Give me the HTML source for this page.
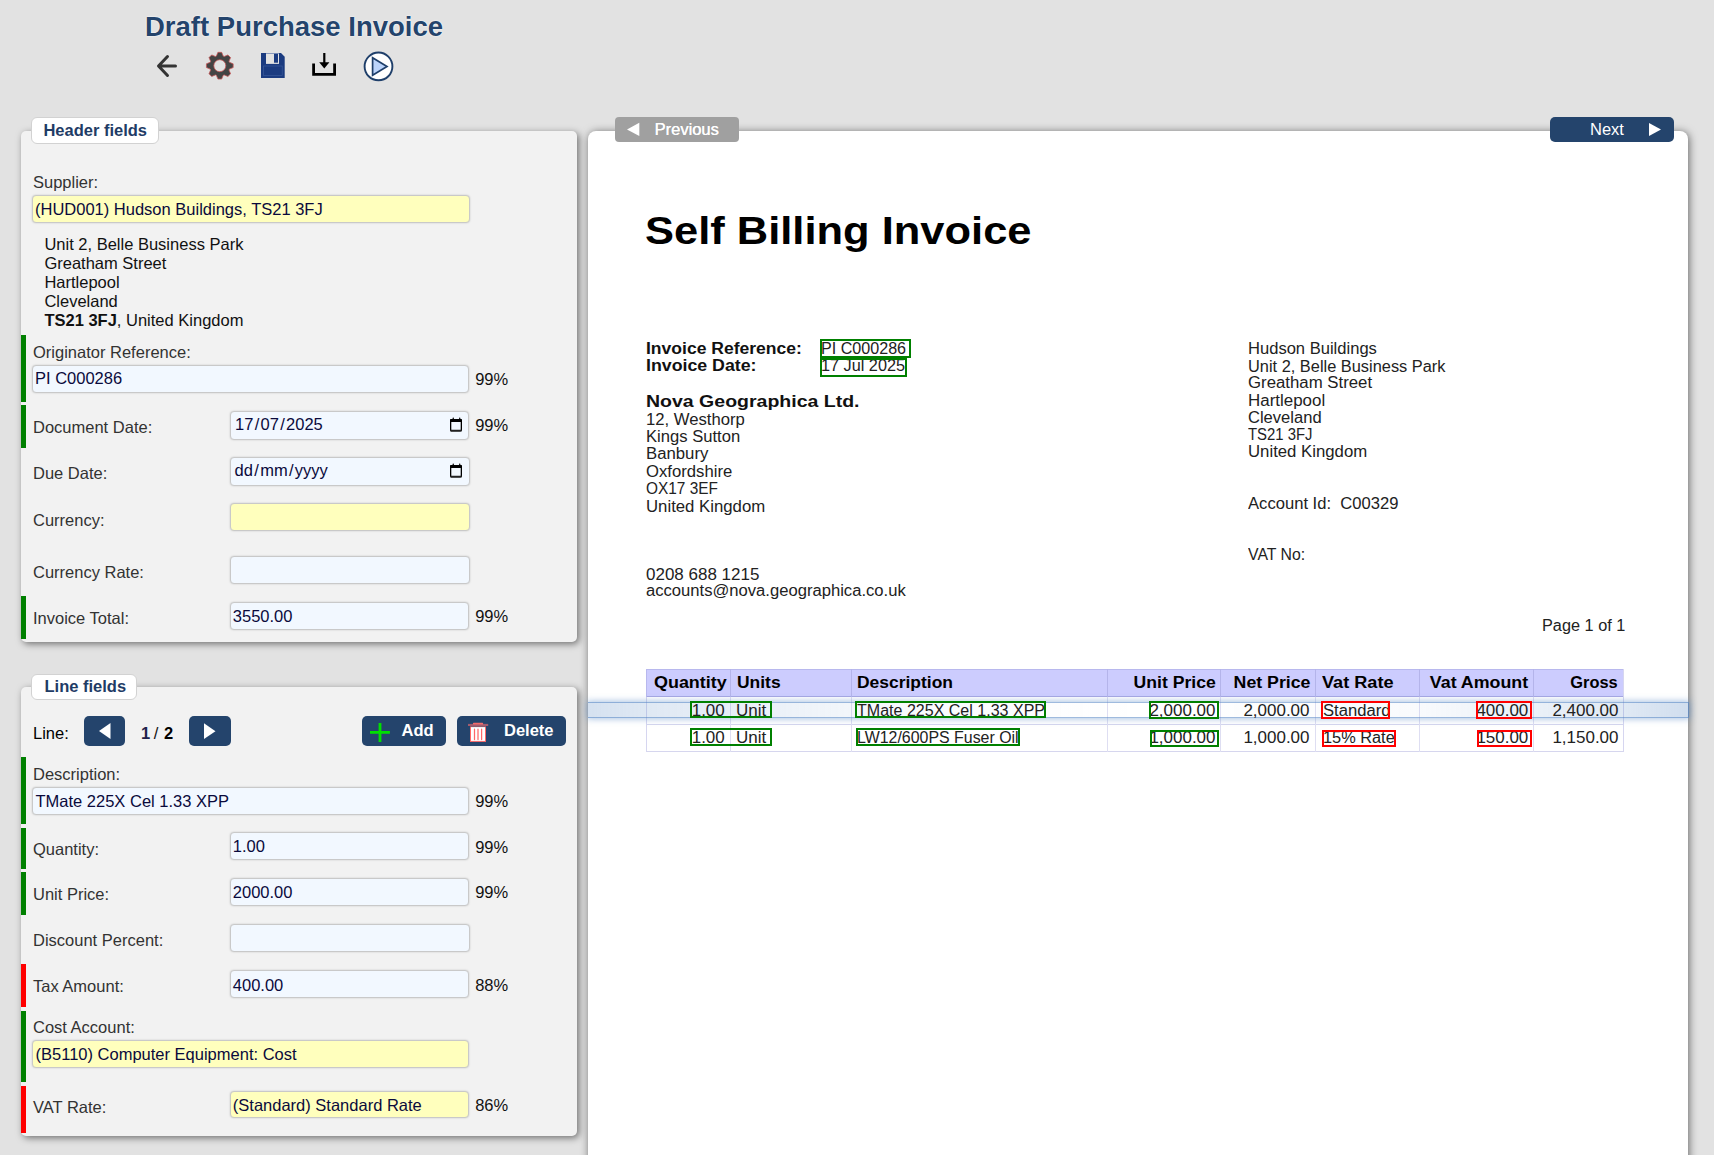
<!DOCTYPE html>
<html><head><meta charset="utf-8"><title>Draft Purchase Invoice</title>
<style>
html,body{margin:0;padding:0;}
body{width:1714px;height:1155px;overflow:hidden;position:relative;background:#e2e2e2;font-family:'Liberation Sans', sans-serif;}
</style></head><body>
<div style="position:absolute;left:145.00px;top:13.00px;font-size:27.5px;font-weight:700;line-height:27.5px;color:#24446c;white-space:nowrap;text-shadow:0 0 2px #fff,0 0 1px #fff;">Draft Purchase Invoice</div>
<svg style="position:absolute;left:0;top:0" width="420" height="100" viewBox="0 0 420 100">
<g fill="none" stroke="#333" stroke-width="3" stroke-linecap="round" stroke-linejoin="round">
<path d="M175.5 66 H159.5 M167.5 56.5 L158.5 66 L167.5 75.5"/></g>
<g transform="translate(219.8 65.7)">
<path fill="#444" stroke="#c55" stroke-width="0.75" stroke-linejoin="round" fill-rule="evenodd" d="M-3.90 -9.42 L-3.40 -9.62 L-1.88 -13.37 L1.88 -13.37 L3.40 -9.62 L3.90 -9.42 L4.39 -9.20 L8.12 -10.78 L10.78 -8.12 L9.20 -4.39 L9.42 -3.90 L9.62 -3.40 L13.37 -1.88 L13.37 1.88 L9.62 3.40 L9.42 3.90 L9.20 4.39 L10.78 8.12 L8.12 10.78 L4.39 9.20 L3.90 9.42 L3.40 9.62 L1.88 13.37 L-1.88 13.37 L-3.40 9.62 L-3.90 9.42 L-4.39 9.20 L-8.12 10.78 L-10.78 8.12 L-9.20 4.39 L-9.42 3.90 L-9.62 3.40 L-13.37 1.88 L-13.37 -1.88 L-9.62 -3.40 L-9.42 -3.90 L-9.20 -4.39 L-10.78 -8.12 L-8.12 -10.78 L-4.39 -9.20 Z M6.0 0 A6.0 6.0 0 1 0 -6.0 0 A6.0 6.0 0 1 0 6.0 0 Z"/>
</g>
<path fill="#1b3b80" d="M261 53 H281 L284.7 56.7 V78 H261 Z"/>
<rect x="266" y="53.6" width="13" height="10.3" fill="#e2e2e2"/>
<rect x="266" y="53" width="13" height="0.9" fill="#8c9cc0"/>
<rect x="274" y="53.8" width="4" height="8.9" fill="#1b3b80"/>
<rect x="263.5" y="66" width="18.7" height="9.5" fill="none" stroke="#3a5a9a" stroke-width="0.7"/>
<g fill="none" stroke="#000" stroke-width="2.8" stroke-linecap="butt" stroke-linejoin="miter">
<path d="M313.6 63.5 V74.3 H334.6 V63.5"/></g>
<path d="M324.3 53 V64" stroke="#000" stroke-width="2.2"/>
<path d="M319.2 62.2 H329.4 L324.3 68.6 Z" fill="#000"/>
<circle cx="378.5" cy="66.4" r="13.9" fill="#fff" stroke="#1f3f6a" stroke-width="1.9"/>
<path d="M372.6 57.7 L387 66.4 L372.6 75.3 Z" fill="#bcd4fb" stroke="#1f3f6a" stroke-width="1.7" stroke-linejoin="miter"/>
</svg>
<div style="position:absolute;left:21px;top:131px;width:556px;height:511px;background:#f2f2f2;border-radius:5px;box-shadow:2px 2px 7px rgba(0,0,0,0.5);"></div>
<div style="position:absolute;left:31px;top:117px;width:127.5px;height:26.5px;background:#fff;border-radius:6px;border:1px solid #d2d2d2;box-sizing:border-box;"></div>
<div style="position:absolute;left:43.40px;top:122.00px;font-size:16.5px;font-weight:700;line-height:16.5px;color:#1f3c66;white-space:nowrap;">Header fields</div>
<div style="position:absolute;left:21px;top:687px;width:556px;height:449px;background:#f2f2f2;border-radius:5px;box-shadow:2px 2px 7px rgba(0,0,0,0.5);"></div>
<div style="position:absolute;left:31px;top:674px;width:105.5px;height:26px;background:#fff;border-radius:6px;border:1px solid #d2d2d2;box-sizing:border-box;"></div>
<div style="position:absolute;left:44.50px;top:678.00px;font-size:16.5px;font-weight:700;line-height:16.5px;color:#1f3c66;white-space:nowrap;">Line fields</div>
<div style="position:absolute;left:33.00px;top:174.00px;font-size:16.5px;font-weight:400;line-height:16.5px;color:#333;white-space:nowrap;">Supplier:</div>
<div style="position:absolute;left:32px;top:195px;width:438px;height:28px;background:#ffffbd;border:1px solid #c9c9c9;border-radius:4px;box-sizing:border-box;box-shadow:0 0 2px rgba(0,0,0,0.18);"></div>
<div style="position:absolute;left:35.00px;top:201.00px;font-size:16.5px;font-weight:400;line-height:16.5px;color:#0a0a3c;white-space:nowrap;">(HUD001) Hudson Buildings, TS21 3FJ</div>
<div style="position:absolute;left:44.40px;top:236.00px;font-size:16.5px;font-weight:400;line-height:16.5px;color:#111;white-space:nowrap;">Unit 2, Belle Business Park</div>
<div style="position:absolute;left:44.40px;top:255.00px;font-size:16.5px;font-weight:400;line-height:16.5px;color:#111;white-space:nowrap;">Greatham Street</div>
<div style="position:absolute;left:44.40px;top:274.00px;font-size:16.5px;font-weight:400;line-height:16.5px;color:#111;white-space:nowrap;">Hartlepool</div>
<div style="position:absolute;left:44.40px;top:293.00px;font-size:16.5px;font-weight:400;line-height:16.5px;color:#111;white-space:nowrap;">Cleveland</div>
<div style="position:absolute;left:44.4px;top:312px;font-size:16.5px;line-height:16.5px;color:#111;white-space:nowrap"><b>TS21 3FJ</b>, United Kingdom</div>
<div style="position:absolute;left:21px;top:335px;width:5px;height:67px;background:#008000;"></div>
<div style="position:absolute;left:33.00px;top:344.00px;font-size:16.5px;font-weight:400;line-height:16.5px;color:#333;white-space:nowrap;">Originator Reference:</div>
<div style="position:absolute;left:32px;top:365px;width:437px;height:28px;background:#f2f8ff;border:1px solid #c9c9c9;border-radius:4px;box-sizing:border-box;box-shadow:0 0 2px rgba(0,0,0,0.18);"></div>
<div style="position:absolute;left:35.00px;top:370.00px;font-size:16.5px;font-weight:400;line-height:16.5px;color:#0a0a3c;white-space:nowrap;">PI C000286</div>
<div style="position:absolute;left:475.20px;top:371.00px;font-size:16.5px;font-weight:400;line-height:16.5px;color:#111;white-space:nowrap;">99%</div>
<div style="position:absolute;left:21px;top:405px;width:5px;height:43px;background:#008000;"></div>
<div style="position:absolute;left:33.00px;top:418.50px;font-size:16.5px;font-weight:400;line-height:16.5px;color:#333;white-space:nowrap;">Document Date:</div>
<div style="position:absolute;left:230px;top:411px;width:238.5px;height:28.5px;background:#f2f8ff;border:1px solid #c9c9c9;border-radius:4px;box-sizing:border-box;box-shadow:0 0 2px rgba(0,0,0,0.18);"></div>
<div style="position:absolute;left:235.00px;top:416.00px;font-size:16.5px;font-weight:400;line-height:16.5px;color:#0a0a3c;white-space:nowrap;">17<span style="margin:0 1.3px">/</span>07<span style="margin:0 1.3px">/</span>2025</div>
<div style="position:absolute;left:475.20px;top:417.20px;font-size:16.5px;font-weight:400;line-height:16.5px;color:#111;white-space:nowrap;">99%</div>
<div style="position:absolute;left:33.00px;top:465.00px;font-size:16.5px;font-weight:400;line-height:16.5px;color:#333;white-space:nowrap;">Due Date:</div>
<div style="position:absolute;left:230px;top:457px;width:239.5px;height:28.5px;background:#f2f8ff;border:1px solid #c9c9c9;border-radius:4px;box-sizing:border-box;box-shadow:0 0 2px rgba(0,0,0,0.18);"></div>
<div style="position:absolute;left:234.60px;top:462.00px;font-size:16.5px;font-weight:400;line-height:16.5px;color:#0a0a3c;white-space:nowrap;">dd<span style="margin:0 1.3px">/</span>mm<span style="margin:0 1.3px">/</span>yyyy</div>
<div style="position:absolute;left:33.00px;top:512.00px;font-size:16.5px;font-weight:400;line-height:16.5px;color:#333;white-space:nowrap;">Currency:</div>
<div style="position:absolute;left:230px;top:503px;width:239.5px;height:28px;background:#ffffbd;border:1px solid #c9c9c9;border-radius:4px;box-sizing:border-box;box-shadow:0 0 2px rgba(0,0,0,0.18);"></div>
<div style="position:absolute;left:33.00px;top:564.00px;font-size:16.5px;font-weight:400;line-height:16.5px;color:#333;white-space:nowrap;">Currency Rate:</div>
<div style="position:absolute;left:230px;top:556px;width:239.5px;height:28px;background:#f2f8ff;border:1px solid #c9c9c9;border-radius:4px;box-sizing:border-box;box-shadow:0 0 2px rgba(0,0,0,0.18);"></div>
<div style="position:absolute;left:21px;top:596px;width:5px;height:43px;background:#008000;"></div>
<div style="position:absolute;left:33.00px;top:610.00px;font-size:16.5px;font-weight:400;line-height:16.5px;color:#333;white-space:nowrap;">Invoice Total:</div>
<div style="position:absolute;left:230px;top:602px;width:238.5px;height:28px;background:#f2f8ff;border:1px solid #c9c9c9;border-radius:4px;box-sizing:border-box;box-shadow:0 0 2px rgba(0,0,0,0.18);"></div>
<div style="position:absolute;left:232.80px;top:608.00px;font-size:16.5px;font-weight:400;line-height:16.5px;color:#0a0a3c;white-space:nowrap;">3550.00</div>
<div style="position:absolute;left:475.20px;top:608.00px;font-size:16.5px;font-weight:400;line-height:16.5px;color:#111;white-space:nowrap;">99%</div>
<svg style="position:absolute;left:449px;top:417px" width="14" height="16" viewBox="0 0 14 16"><rect x="1.65" y="3.5" width="10.7" height="10.3" rx="1.2" fill="none" stroke="#000" stroke-width="1.3"/><rect x="1" y="2" width="12" height="3" rx="0.6" fill="#000"/><path d="M3.3 2.6 L3.9 0.6 H4.6 L5.1 2.6 Z M9.9 2.6 L10.4 0.6 H11.1 L11.6 2.6 Z" fill="#000"/><rect x="1" y="12.8" width="12" height="1.8" rx="0.8" fill="#222"/></svg>
<svg style="position:absolute;left:449px;top:463px" width="14" height="16" viewBox="0 0 14 16"><rect x="1.65" y="3.5" width="10.7" height="10.3" rx="1.2" fill="none" stroke="#000" stroke-width="1.3"/><rect x="1" y="2" width="12" height="3" rx="0.6" fill="#000"/><path d="M3.3 2.6 L3.9 0.6 H4.6 L5.1 2.6 Z M9.9 2.6 L10.4 0.6 H11.1 L11.6 2.6 Z" fill="#000"/><rect x="1" y="12.8" width="12" height="1.8" rx="0.8" fill="#222"/></svg>
<div style="position:absolute;left:33.00px;top:725.00px;font-size:16.5px;font-weight:400;line-height:16.5px;color:#000;white-space:nowrap;">Line:</div>
<div style="position:absolute;left:84px;top:716px;width:41px;height:30px;background:#24446c;border-radius:5px;"></div>
<div style="position:absolute;left:141.00px;top:725.00px;font-size:16.5px;font-weight:700;line-height:16.5px;color:#22224a;white-space:nowrap;">1</div>
<div style="position:absolute;left:153.80px;top:725.00px;font-size:16.5px;font-weight:400;line-height:16.5px;color:#111;white-space:nowrap;">/</div>
<div style="position:absolute;left:164.00px;top:725.00px;font-size:16.5px;font-weight:700;line-height:16.5px;color:#000;white-space:nowrap;">2</div>
<div style="position:absolute;left:189px;top:716px;width:42px;height:30px;background:#24446c;border-radius:5px;"></div>
<svg style="position:absolute;left:0;top:700px" width="240" height="50"><path d="M99 31 L110.5 23 V39 Z" fill="#fff"/><path d="M204 23.3 L215.5 31.2 L204 39 Z" fill="#fff"/></svg>
<div style="position:absolute;left:362px;top:716px;width:84px;height:30px;background:#24446c;border-radius:5px;"></div>
<div style="position:absolute;left:401.50px;top:722.00px;font-size:16.5px;font-weight:700;line-height:16.5px;color:#fff;white-space:nowrap;">Add</div>
<div style="position:absolute;left:457px;top:716px;width:109px;height:30px;background:#24446c;border-radius:5px;"></div>
<div style="position:absolute;left:504.00px;top:722.00px;font-size:16.5px;font-weight:700;line-height:16.5px;color:#fff;white-space:nowrap;">Delete</div>
<svg style="position:absolute;left:360px;top:710px" width="220" height="40"><path d="M20 13 V32 M10 22.4 H29.9" stroke="#00e000" stroke-width="2.8"/></svg>
<svg style="position:absolute;left:462px;top:718px" width="32" height="28"><rect x="6" y="5.9" width="20.2" height="2.1" fill="#a35c6e"/><rect x="11" y="4.7" width="10.1" height="1.9" rx="0.6" fill="#f26b6b"/><rect x="8.5" y="8.5" width="15" height="14.9" fill="#fff" stroke="#ff6868" stroke-width="1"/><rect x="8" y="8" width="16" height="1.1" fill="#8d5a6c"/><path d="M12.5 11.2 V21.5 M16 11.2 V21.5 M19.6 11.2 V21.5" stroke="#ff6868" stroke-width="1.25" stroke-linecap="round"/></svg>
<div style="position:absolute;left:21px;top:757px;width:5px;height:66.5px;background:#008000;"></div>
<div style="position:absolute;left:33.00px;top:766.30px;font-size:16.5px;font-weight:400;line-height:16.5px;color:#333;white-space:nowrap;">Description:</div>
<div style="position:absolute;left:32px;top:787px;width:437px;height:28px;background:#f2f8ff;border:1px solid #c9c9c9;border-radius:4px;box-sizing:border-box;box-shadow:0 0 2px rgba(0,0,0,0.18);"></div>
<div style="position:absolute;left:35.50px;top:792.70px;font-size:16.5px;font-weight:400;line-height:16.5px;color:#0a0a3c;white-space:nowrap;">TMate 225X Cel 1.33 XPP</div>
<div style="position:absolute;left:475.20px;top:793.40px;font-size:16.5px;font-weight:400;line-height:16.5px;color:#111;white-space:nowrap;">99%</div>
<div style="position:absolute;left:21px;top:827.5px;width:5px;height:41.0px;background:#008000;"></div>
<div style="position:absolute;left:33.00px;top:841.20px;font-size:16.5px;font-weight:400;line-height:16.5px;color:#333;white-space:nowrap;">Quantity:</div>
<div style="position:absolute;left:230px;top:832px;width:238.5px;height:28px;background:#f2f8ff;border:1px solid #c9c9c9;border-radius:4px;box-sizing:border-box;box-shadow:0 0 2px rgba(0,0,0,0.18);"></div>
<div style="position:absolute;left:232.80px;top:838.20px;font-size:16.5px;font-weight:400;line-height:16.5px;color:#0a0a3c;white-space:nowrap;">1.00</div>
<div style="position:absolute;left:475.20px;top:838.50px;font-size:16.5px;font-weight:400;line-height:16.5px;color:#111;white-space:nowrap;">99%</div>
<div style="position:absolute;left:21px;top:872px;width:5px;height:43px;background:#008000;"></div>
<div style="position:absolute;left:33.00px;top:885.70px;font-size:16.5px;font-weight:400;line-height:16.5px;color:#333;white-space:nowrap;">Unit Price:</div>
<div style="position:absolute;left:230px;top:878px;width:238.5px;height:28px;background:#f2f8ff;border:1px solid #c9c9c9;border-radius:4px;box-sizing:border-box;box-shadow:0 0 2px rgba(0,0,0,0.18);"></div>
<div style="position:absolute;left:232.80px;top:884.00px;font-size:16.5px;font-weight:400;line-height:16.5px;color:#0a0a3c;white-space:nowrap;">2000.00</div>
<div style="position:absolute;left:475.20px;top:884.00px;font-size:16.5px;font-weight:400;line-height:16.5px;color:#111;white-space:nowrap;">99%</div>
<div style="position:absolute;left:33.00px;top:932.00px;font-size:16.5px;font-weight:400;line-height:16.5px;color:#333;white-space:nowrap;">Discount Percent:</div>
<div style="position:absolute;left:230px;top:924px;width:239.5px;height:28px;background:#f2f8ff;border:1px solid #c9c9c9;border-radius:4px;box-sizing:border-box;box-shadow:0 0 2px rgba(0,0,0,0.18);"></div>
<div style="position:absolute;left:21px;top:964px;width:5px;height:43px;background:#ff0000;"></div>
<div style="position:absolute;left:33.00px;top:978.20px;font-size:16.5px;font-weight:400;line-height:16.5px;color:#333;white-space:nowrap;">Tax Amount:</div>
<div style="position:absolute;left:230px;top:970px;width:238.5px;height:28px;background:#f2f8ff;border:1px solid #c9c9c9;border-radius:4px;box-sizing:border-box;box-shadow:0 0 2px rgba(0,0,0,0.18);"></div>
<div style="position:absolute;left:232.80px;top:976.50px;font-size:16.5px;font-weight:400;line-height:16.5px;color:#0a0a3c;white-space:nowrap;">400.00</div>
<div style="position:absolute;left:475.20px;top:976.50px;font-size:16.5px;font-weight:400;line-height:16.5px;color:#111;white-space:nowrap;">88%</div>
<div style="position:absolute;left:21px;top:1010.5px;width:5px;height:71.5px;background:#008000;"></div>
<div style="position:absolute;left:33.00px;top:1018.80px;font-size:16.5px;font-weight:400;line-height:16.5px;color:#333;white-space:nowrap;">Cost Account:</div>
<div style="position:absolute;left:32px;top:1040px;width:437px;height:28px;background:#ffffbd;border:1px solid #c9c9c9;border-radius:4px;box-sizing:border-box;box-shadow:0 0 2px rgba(0,0,0,0.18);"></div>
<div style="position:absolute;left:35.50px;top:1046.00px;font-size:16.5px;font-weight:400;line-height:16.5px;color:#0a0a3c;white-space:nowrap;">(B5110) Computer Equipment: Cost</div>
<div style="position:absolute;left:21px;top:1085.5px;width:5px;height:47.5px;background:#ff0000;"></div>
<div style="position:absolute;left:33.00px;top:1099.30px;font-size:16.5px;font-weight:400;line-height:16.5px;color:#333;white-space:nowrap;">VAT Rate:</div>
<div style="position:absolute;left:230px;top:1091px;width:238.5px;height:27px;background:#ffffbd;border:1px solid #c9c9c9;border-radius:4px;box-sizing:border-box;box-shadow:0 0 2px rgba(0,0,0,0.18);"></div>
<div style="position:absolute;left:232.80px;top:1096.50px;font-size:16.5px;font-weight:400;line-height:16.5px;color:#0a0a3c;white-space:nowrap;">(Standard) Standard Rate</div>
<div style="position:absolute;left:475.20px;top:1096.50px;font-size:16.5px;font-weight:400;line-height:16.5px;color:#111;white-space:nowrap;">86%</div>
<div style="position:absolute;left:588px;top:131px;width:1100px;height:1200px;background:#fff;border-radius:8px;box-shadow:1px 1px 9px rgba(0,0,0,0.55);"></div>
<div style="position:absolute;left:615px;top:117px;width:124px;height:25px;background:#a0a0a0;border-radius:4px;"></div>
<div style="position:absolute;left:1550px;top:117px;width:124px;height:25px;background:#24446c;border-radius:5px;"></div>
<svg style="position:absolute;left:600px;top:110px" width="1100" height="40"><path d="M27 19.4 L39.3 12.7 V26 Z" fill="#fff"/><path d="M1049 13 L1061 19.5 L1049 26 Z" fill="#fff"/></svg>
<div style="position:absolute;left:654.50px;top:121.30px;font-size:16.5px;font-weight:400;line-height:16.5px;color:#fff;white-space:nowrap;text-shadow:0.3px 0 0 #fff;">Previous</div>
<div style="position:absolute;left:1590.00px;top:121.00px;font-size:16.5px;font-weight:400;line-height:16.5px;color:#fff;white-space:nowrap;">Next</div>
<div style="position:absolute;left:644.60px;top:211.30px;font-size:39px;font-weight:700;line-height:39px;color:#000;white-space:nowrap;transform:scaleX(1.1147);transform-origin:left 0;">Self Billing Invoice</div>
<div style="position:absolute;left:646.00px;top:340.80px;font-size:15.8px;font-weight:700;line-height:15.8px;color:#111;white-space:nowrap;transform:scaleX(1.1096);transform-origin:left 0;">Invoice Reference:</div>
<div style="position:absolute;left:646.00px;top:358.40px;font-size:15.8px;font-weight:700;line-height:15.8px;color:#111;white-space:nowrap;transform:scaleX(1.1241);transform-origin:left 0;">Invoice Date:</div>
<div style="position:absolute;left:820.60px;top:340.80px;font-size:15.8px;font-weight:400;line-height:15.8px;color:#222;white-space:nowrap;transform:scaleX(1.0197);transform-origin:left 0;">PI C000286</div>
<div style="position:absolute;left:820.60px;top:358.40px;font-size:15.8px;font-weight:400;line-height:15.8px;color:#222;white-space:nowrap;transform:scaleX(1.0285);transform-origin:left 0;">17 Jul 2025</div>
<div style="position:absolute;left:820px;top:339px;width:91px;height:18.5px;border:2px solid #008000;box-sizing:border-box;"></div>
<div style="position:absolute;left:820px;top:357.5px;width:86.5px;height:19.0px;border:2px solid #008000;box-sizing:border-box;"></div>
<div style="position:absolute;left:646.00px;top:392.50px;font-size:17.4px;font-weight:700;line-height:17.4px;color:#111;white-space:nowrap;transform:scaleX(1.1215);transform-origin:left 0;">Nova Geographica Ltd.</div>
<div style="position:absolute;left:646.00px;top:411.70px;font-size:15.8px;font-weight:400;line-height:15.8px;color:#222;white-space:nowrap;transform:scaleX(1.0552);transform-origin:left 0;">12, Westhorp</div>
<div style="position:absolute;left:646.00px;top:429.10px;font-size:15.8px;font-weight:400;line-height:15.8px;color:#222;white-space:nowrap;transform:scaleX(1.0506);transform-origin:left 0;">Kings Sutton</div>
<div style="position:absolute;left:646.00px;top:446.00px;font-size:15.8px;font-weight:400;line-height:15.8px;color:#222;white-space:nowrap;transform:scaleX(1.0605);transform-origin:left 0;">Banbury</div>
<div style="position:absolute;left:646.00px;top:463.70px;font-size:15.8px;font-weight:400;line-height:15.8px;color:#222;white-space:nowrap;transform:scaleX(1.0559);transform-origin:left 0;">Oxfordshire</div>
<div style="position:absolute;left:646.00px;top:480.50px;font-size:15.8px;font-weight:400;line-height:15.8px;color:#222;white-space:nowrap;transform:scaleX(0.9744);transform-origin:left 0;">OX17 3EF</div>
<div style="position:absolute;left:646.00px;top:498.50px;font-size:15.8px;font-weight:400;line-height:15.8px;color:#222;white-space:nowrap;transform:scaleX(1.0601);transform-origin:left 0;">United Kingdom</div>
<div style="position:absolute;left:646.00px;top:566.80px;font-size:15.8px;font-weight:400;line-height:15.8px;color:#222;white-space:nowrap;transform:scaleX(1.0750);transform-origin:left 0;">0208 688 1215</div>
<div style="position:absolute;left:646.00px;top:582.90px;font-size:15.8px;font-weight:400;line-height:15.8px;color:#222;white-space:nowrap;transform:scaleX(1.0514);transform-origin:left 0;">accounts@nova.geographica.co.uk</div>
<div style="position:absolute;left:1248.00px;top:340.90px;font-size:15.8px;font-weight:400;line-height:15.8px;color:#222;white-space:nowrap;transform:scaleX(1.0483);transform-origin:left 0;">Hudson Buildings</div>
<div style="position:absolute;left:1248.00px;top:358.60px;font-size:15.8px;font-weight:400;line-height:15.8px;color:#222;white-space:nowrap;transform:scaleX(1.0365);transform-origin:left 0;">Unit 2, Belle Business Park</div>
<div style="position:absolute;left:1248.00px;top:375.40px;font-size:15.8px;font-weight:400;line-height:15.8px;color:#222;white-space:nowrap;transform:scaleX(1.0629);transform-origin:left 0;">Greatham Street</div>
<div style="position:absolute;left:1248.00px;top:393.00px;font-size:15.8px;font-weight:400;line-height:15.8px;color:#222;white-space:nowrap;transform:scaleX(1.0714);transform-origin:left 0;">Hartlepool</div>
<div style="position:absolute;left:1248.00px;top:409.50px;font-size:15.8px;font-weight:400;line-height:15.8px;color:#222;white-space:nowrap;transform:scaleX(1.0474);transform-origin:left 0;">Cleveland</div>
<div style="position:absolute;left:1248.00px;top:427.00px;font-size:15.8px;font-weight:400;line-height:15.8px;color:#222;white-space:nowrap;transform:scaleX(0.9414);transform-origin:left 0;">TS21 3FJ</div>
<div style="position:absolute;left:1248.00px;top:444.00px;font-size:15.8px;font-weight:400;line-height:15.8px;color:#222;white-space:nowrap;transform:scaleX(1.0601);transform-origin:left 0;">United Kingdom</div>
<div style="position:absolute;left:1248.00px;top:495.90px;font-size:15.8px;font-weight:400;line-height:15.8px;color:#222;white-space:nowrap;transform:scaleX(1.0512);transform-origin:left 0;">Account Id:&nbsp; C00329</div>
<div style="position:absolute;left:1248.00px;top:546.90px;font-size:15.8px;font-weight:400;line-height:15.8px;color:#222;white-space:nowrap;transform:scaleX(1.0019);transform-origin:left 0;">VAT No:</div>
<div style="position:absolute;left:1542.00px;top:618.00px;font-size:15.8px;font-weight:400;line-height:15.8px;color:#222;white-space:nowrap;transform:scaleX(1.0307);transform-origin:left 0;">Page 1 of 1</div>
<div style="position:absolute;left:646px;top:669px;width:978px;height:28px;background:#ccccfe;"></div>
<div style="position:absolute;left:646px;top:696px;width:978px;height:1px;background:#a8a8e2;"></div>
<div style="position:absolute;left:646px;top:669px;width:978px;height:1px;background:#b8b8ee;"></div>
<div style="position:absolute;left:646px;top:697px;width:1px;height:55px;background:#d6d6f0;"></div>
<div style="position:absolute;left:1623px;top:669px;width:1px;height:83px;background:#d6d6f0;"></div>
<div style="position:absolute;left:646px;top:669px;width:1px;height:28px;background:#b8b8ee;"></div>
<div style="position:absolute;left:646px;top:723.5px;width:978px;height:1.2px;background:#d6d6ee;"></div>
<div style="position:absolute;left:646px;top:751px;width:978px;height:1.2px;background:#d6d6ee;"></div>
<div style="position:absolute;left:730.4px;top:669px;width:1px;height:28px;background:#b4b4ea;"></div>
<div style="position:absolute;left:730.4px;top:697px;width:1px;height:55px;background:#dedef2;"></div>
<div style="position:absolute;left:851.2px;top:669px;width:1px;height:28px;background:#b4b4ea;"></div>
<div style="position:absolute;left:851.2px;top:697px;width:1px;height:55px;background:#dedef2;"></div>
<div style="position:absolute;left:1107.2px;top:669px;width:1px;height:28px;background:#b4b4ea;"></div>
<div style="position:absolute;left:1107.2px;top:697px;width:1px;height:55px;background:#dedef2;"></div>
<div style="position:absolute;left:1220.1px;top:669px;width:1px;height:28px;background:#b4b4ea;"></div>
<div style="position:absolute;left:1220.1px;top:697px;width:1px;height:55px;background:#dedef2;"></div>
<div style="position:absolute;left:1315.3px;top:669px;width:1px;height:28px;background:#b4b4ea;"></div>
<div style="position:absolute;left:1315.3px;top:697px;width:1px;height:55px;background:#dedef2;"></div>
<div style="position:absolute;left:1419px;top:669px;width:1px;height:28px;background:#b4b4ea;"></div>
<div style="position:absolute;left:1419px;top:697px;width:1px;height:55px;background:#dedef2;"></div>
<div style="position:absolute;left:1532.6px;top:669px;width:1px;height:28px;background:#b4b4ea;"></div>
<div style="position:absolute;left:1532.6px;top:697px;width:1px;height:55px;background:#dedef2;"></div>
<div style="position:absolute;left:654.00px;top:675.30px;font-size:15.8px;font-weight:700;line-height:15.8px;color:#000;white-space:nowrap;transform:scaleX(1.1351);transform-origin:left 0;">Quantity</div>
<div style="position:absolute;left:736.50px;top:675.30px;font-size:15.8px;font-weight:700;line-height:15.8px;color:#000;white-space:nowrap;transform:scaleX(1.1048);transform-origin:left 0;">Units</div>
<div style="position:absolute;left:857.00px;top:675.30px;font-size:15.8px;font-weight:700;line-height:15.8px;color:#000;white-space:nowrap;transform:scaleX(1.1048);transform-origin:left 0;">Description</div>
<div style="position:absolute;left:1141.55px;top:675.30px;font-size:15.8px;font-weight:700;line-height:15.8px;color:#000;white-space:nowrap;transform:scaleX(1.1138);transform-origin:right 0;">Unit Price</div>
<div style="position:absolute;left:1241.60px;top:675.30px;font-size:15.8px;font-weight:700;line-height:15.8px;color:#000;white-space:nowrap;transform:scaleX(1.1229);transform-origin:right 0;">Net Price</div>
<div style="position:absolute;left:1321.50px;top:675.30px;font-size:15.8px;font-weight:700;line-height:15.8px;color:#000;white-space:nowrap;transform:scaleX(1.1481);transform-origin:left 0;">Vat Rate</div>
<div style="position:absolute;left:1440.81px;top:675.30px;font-size:15.8px;font-weight:700;line-height:15.8px;color:#000;white-space:nowrap;transform:scaleX(1.1280);transform-origin:right 0;">Vat Amount</div>
<div style="position:absolute;left:1572.34px;top:675.30px;font-size:15.8px;font-weight:700;line-height:15.8px;color:#000;white-space:nowrap;transform:scaleX(1.0376);transform-origin:right 0;">Gross</div>
<div style="position:absolute;left:588px;top:702px;width:1101px;height:16px;border-top:1px solid rgba(80,130,195,0.55);border-bottom:1px solid rgba(80,130,195,0.55);border-right:1px solid rgba(80,130,195,0.6);box-sizing:border-box;background:linear-gradient(to right, rgba(100,145,200,0.27), rgba(100,145,200,0.2) 6%, rgba(100,145,200,0.04) 30%, rgba(100,145,200,0.0) 50%, rgba(100,145,200,0.04) 75%, rgba(100,145,200,0.2) 94%, rgba(100,145,200,0.3));box-shadow:0 0 6px 1px rgba(90,140,200,0.5);"></div>
<div style="position:absolute;left:694.25px;top:702.80px;font-size:15.8px;font-weight:400;line-height:15.8px;color:#222;white-space:nowrap;transform:scaleX(1.0752);transform-origin:right 0;">1.00</div>
<div style="position:absolute;left:736.30px;top:702.80px;font-size:15.8px;font-weight:400;line-height:15.8px;color:#222;white-space:nowrap;transform:scaleX(1.0756);transform-origin:left 0;">Unit</div>
<div style="position:absolute;left:857.20px;top:702.80px;font-size:15.8px;font-weight:400;line-height:15.8px;color:#222;white-space:nowrap;transform:scaleX(1.0149);transform-origin:left 0;">TMate 225X Cel 1.33 XPP</div>
<div style="position:absolute;left:1153.50px;top:702.80px;font-size:15.8px;font-weight:400;line-height:15.8px;color:#222;white-space:nowrap;transform:scaleX(1.0749);transform-origin:right 0;">2,000.00</div>
<div style="position:absolute;left:1247.80px;top:702.80px;font-size:15.8px;font-weight:400;line-height:15.8px;color:#222;white-space:nowrap;transform:scaleX(1.0749);transform-origin:right 0;">2,000.00</div>
<div style="position:absolute;left:1322.50px;top:702.80px;font-size:15.8px;font-weight:400;line-height:15.8px;color:#222;white-space:nowrap;transform:scaleX(1.0531);transform-origin:left 0;">Standard</div>
<div style="position:absolute;left:1479.67px;top:702.80px;font-size:15.8px;font-weight:400;line-height:15.8px;color:#222;white-space:nowrap;transform:scaleX(1.0750);transform-origin:right 0;">400.00</div>
<div style="position:absolute;left:1556.50px;top:702.80px;font-size:15.8px;font-weight:400;line-height:15.8px;color:#222;white-space:nowrap;transform:scaleX(1.0749);transform-origin:right 0;">2,400.00</div>
<div style="position:absolute;left:694.25px;top:730.00px;font-size:15.8px;font-weight:400;line-height:15.8px;color:#222;white-space:nowrap;transform:scaleX(1.0752);transform-origin:right 0;">1.00</div>
<div style="position:absolute;left:736.30px;top:730.00px;font-size:15.8px;font-weight:400;line-height:15.8px;color:#222;white-space:nowrap;transform:scaleX(1.0756);transform-origin:left 0;">Unit</div>
<div style="position:absolute;left:857.20px;top:730.00px;font-size:15.8px;font-weight:400;line-height:15.8px;color:#222;white-space:nowrap;transform:scaleX(1.0079);transform-origin:left 0;">LW12/600PS Fuser Oil</div>
<div style="position:absolute;left:1153.50px;top:730.00px;font-size:15.8px;font-weight:400;line-height:15.8px;color:#222;white-space:nowrap;transform:scaleX(1.0749);transform-origin:right 0;">1,000.00</div>
<div style="position:absolute;left:1247.80px;top:730.00px;font-size:15.8px;font-weight:400;line-height:15.8px;color:#222;white-space:nowrap;transform:scaleX(1.0749);transform-origin:right 0;">1,000.00</div>
<div style="position:absolute;left:1322.50px;top:730.00px;font-size:15.8px;font-weight:400;line-height:15.8px;color:#222;white-space:nowrap;transform:scaleX(1.0342);transform-origin:left 0;">15% Rate</div>
<div style="position:absolute;left:1479.67px;top:730.00px;font-size:15.8px;font-weight:400;line-height:15.8px;color:#222;white-space:nowrap;transform:scaleX(1.0750);transform-origin:right 0;">150.00</div>
<div style="position:absolute;left:1556.50px;top:730.00px;font-size:15.8px;font-weight:400;line-height:15.8px;color:#222;white-space:nowrap;transform:scaleX(1.0749);transform-origin:right 0;">1,150.00</div>
<div style="position:absolute;left:690px;top:701.3px;width:81.70000000000005px;height:17.200000000000045px;border:2px solid #008000;box-sizing:border-box;"></div>
<div style="position:absolute;left:690px;top:728.3px;width:81.70000000000005px;height:17.40000000000009px;border:2px solid #008000;box-sizing:border-box;"></div>
<div style="position:absolute;left:855px;top:701.3px;width:191.29999999999995px;height:17.200000000000045px;border:2px solid #008000;box-sizing:border-box;"></div>
<div style="position:absolute;left:856px;top:728.3px;width:164.29999999999995px;height:17.40000000000009px;border:2px solid #008000;box-sizing:border-box;"></div>
<div style="position:absolute;left:1149.3px;top:701.3px;width:69.29999999999995px;height:18.200000000000045px;border:2px solid #008000;box-sizing:border-box;"></div>
<div style="position:absolute;left:1150.2px;top:729.5px;width:68.39999999999986px;height:17.5px;border:2px solid #008000;box-sizing:border-box;"></div>
<div style="position:absolute;left:1321.2px;top:701.3px;width:69.09999999999991px;height:18.200000000000045px;border:2px solid #ff0000;box-sizing:border-box;"></div>
<div style="position:absolute;left:1322.2px;top:729.5px;width:73.5px;height:17.5px;border:2px solid #ff0000;box-sizing:border-box;"></div>
<div style="position:absolute;left:1476.3px;top:701.3px;width:55.600000000000136px;height:18.200000000000045px;border:2px solid #ff0000;box-sizing:border-box;"></div>
<div style="position:absolute;left:1477.4px;top:729.5px;width:54.5px;height:17.5px;border:2px solid #ff0000;box-sizing:border-box;"></div>
</body></html>
